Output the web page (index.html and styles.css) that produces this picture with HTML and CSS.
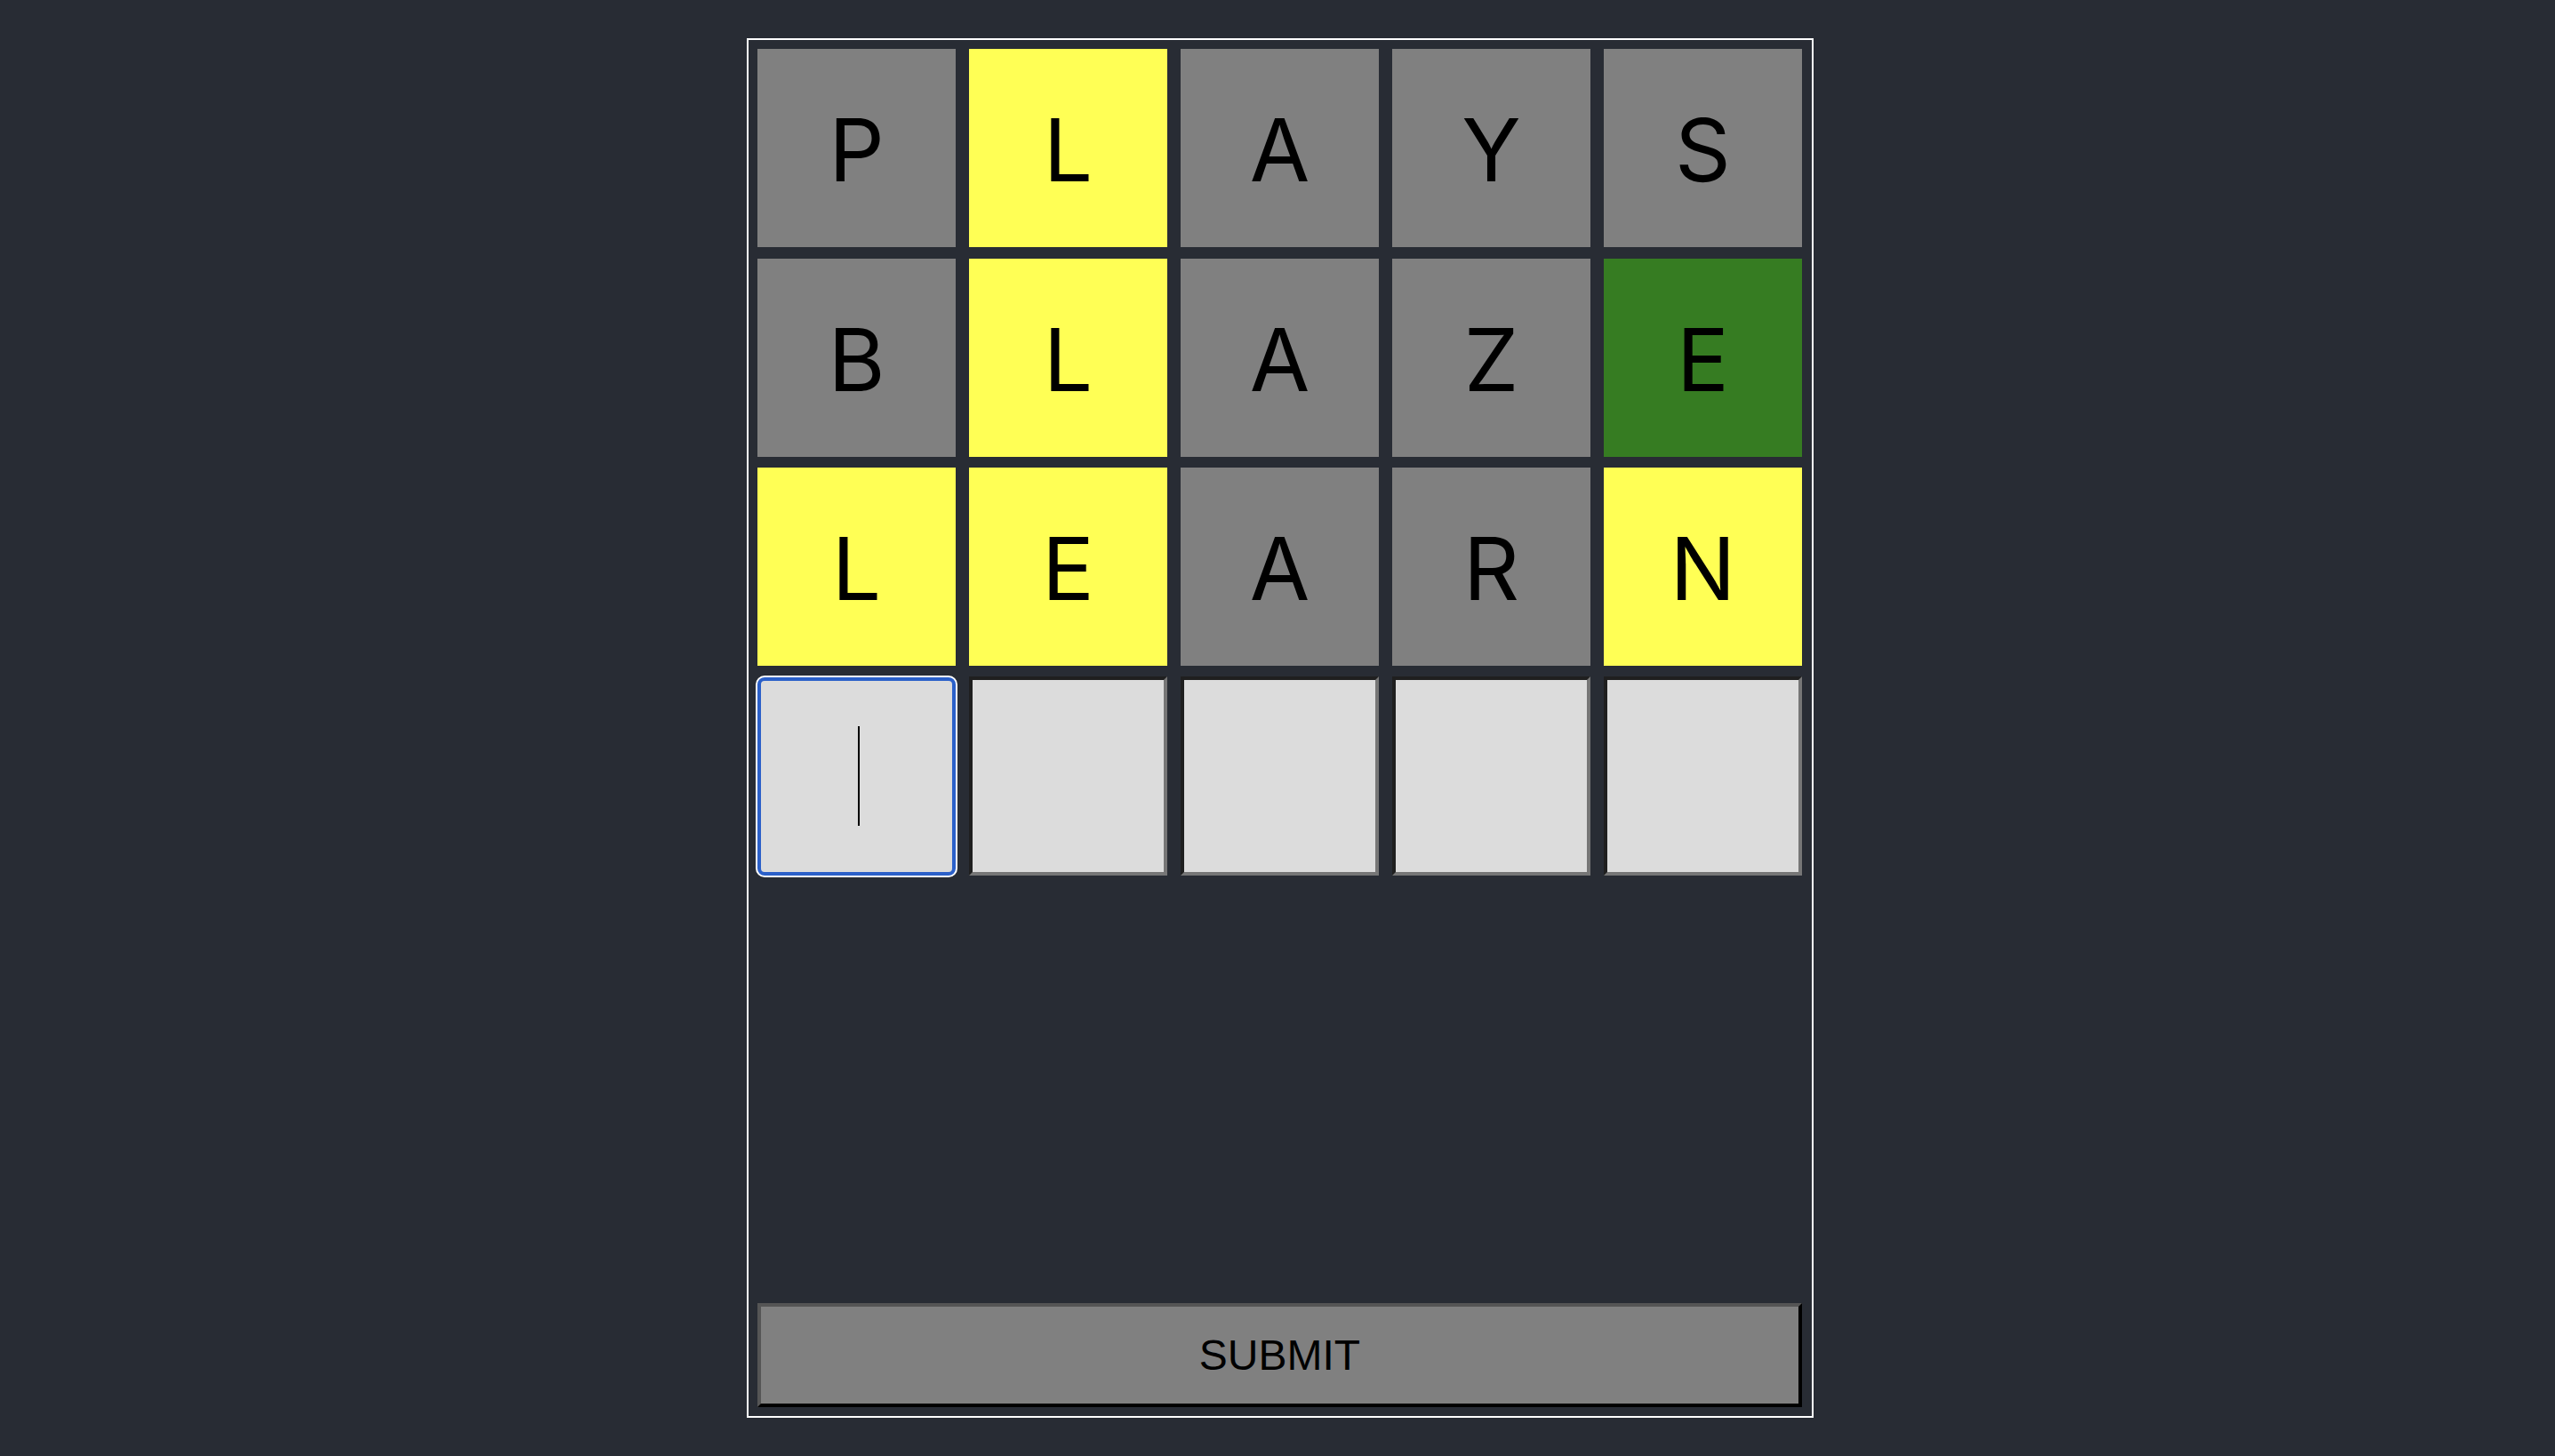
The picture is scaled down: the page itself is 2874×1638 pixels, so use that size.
FILE: index.html
```html
<!DOCTYPE html>
<html lang="en">
<head>
<meta charset="utf-8">
<title>Wordle</title>
<link rel="stylesheet" href="styles.css">
</head>
<body>
<main class="board">
  <div class="grid">
    <div class="tile gray">P</div>
    <div class="tile yellow">L</div>
    <div class="tile gray">A</div>
    <div class="tile gray">Y</div>
    <div class="tile gray">S</div>
    <div class="tile gray">B</div>
    <div class="tile yellow">L</div>
    <div class="tile gray">A</div>
    <div class="tile gray">Z</div>
    <div class="tile green">E</div>
    <div class="tile yellow">L</div>
    <div class="tile yellow">E</div>
    <div class="tile gray">A</div>
    <div class="tile gray">R</div>
    <div class="tile yellow">N</div>
    <div class="caret-wrap">
      <input class="cell active" type="text" maxlength="1" autofocus>
    </div>
    <input class="cell" type="text" maxlength="1">
    <input class="cell" type="text" maxlength="1">
    <input class="cell" type="text" maxlength="1">
    <input class="cell" type="text" maxlength="1">
  </div>
  <button class="submit" type="button">SUBMIT</button>
</main>
</body>
</html>
```
FILE: styles.css
```css
html, body {
  margin: 0;
  height: 100%;
}
body {
  background: #282c34;
  display: flex;
  justify-content: center;
  align-items: flex-start;
  padding: 43px 0 0 6px;
  box-sizing: border-box;
}
.board {
  width: 1200px;
  height: 1552px;
  box-sizing: border-box;
  border: 2px solid #ffffff;
  padding: 10px 11px 10px 10px;
  display: flex;
  flex-direction: column;
}
.grid {
  display: grid;
  grid-template-columns: repeat(5, 1fr);
  grid-auto-rows: 223px;
  column-gap: 15px;
  row-gap: 12.5px;
}
.tile {
  display: flex;
  align-items: center;
  justify-content: center;
  font-family: Inter, "Liberation Sans", sans-serif;
  font-size: 98px;
  color: #000;
  padding-top: 4px;
  box-sizing: border-box;
}
.gray { background: #808080; }
.yellow { background: #ffff55; }
.green { background: #367c22; }
.cell {
  width: 100%;
  height: 224px;
  margin: -1px 0 0 0;
  box-sizing: border-box;
  background: #dcdcdc;
  border-width: 4px;
  border-style: solid;
  border-color: #1f1f1f #767676 #767676 #1f1f1f;
  font-family: "Liberation Sans", Arial, sans-serif;
  font-size: 100px;
  text-align: center;
  padding: 0;
  color: #000;
  caret-color: transparent;
  outline: none;
  display: block;
}
.caret-wrap {
  position: relative;
}
.caret-wrap::after {
  content: "";
  position: absolute;
  left: calc(50% + 1px);
  top: 55px;
  width: 2px;
  height: 112px;
  background: #000;
  pointer-events: none;
}
.cell.active {
  border: 4px solid #2b60c9;
  border-radius: 8px;
  box-shadow: 0 0 0 2px #ffffff;
  margin-top: 0;
  height: 223px;
}
.submit {
  margin-top: auto;
  height: 117px;
  width: 100%;
  box-sizing: border-box;
  background: #808080;
  border-width: 4px;
  border-style: solid;
  border-color: #555555 #000000 #000000 #555555;
  font-family: "Liberation Sans", Arial, sans-serif;
  font-size: 48px;
  color: #000;
  padding: 0;
}
```
